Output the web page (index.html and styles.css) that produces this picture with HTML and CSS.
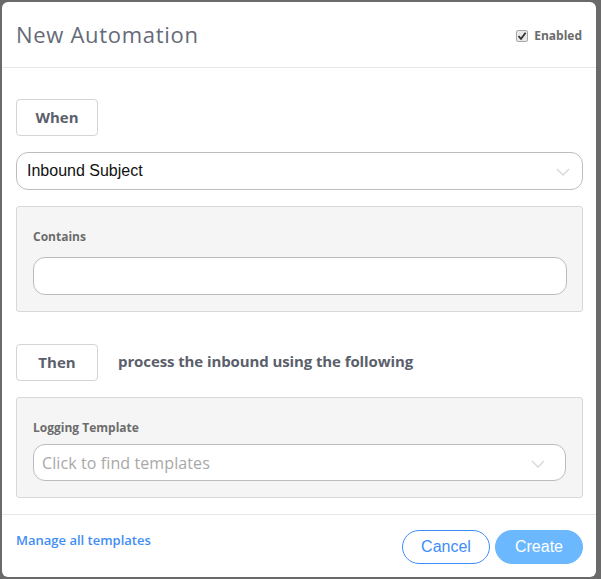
FILE: index.html
```html
<!DOCTYPE html>
<html>
<head>
<meta charset="utf-8">
<link rel="stylesheet" href="styles.css">
</head>
<body>
<div class="modal">
  <div class="header">
    <h1 class="title">New Automation</h1>
    <label class="enabled">
      <span class="check"><svg width="10" height="10" viewBox="0 0 10 10"><path d="M1.5 5.2 L4 7.8 L8.6 1.8" fill="none" stroke="#333" stroke-width="1.8"/></svg></span>
      <span>Enabled</span>
    </label>
  </div>
  <div class="content">
    <div class="tag">When</div>
    <div class="select big">
      <span class="value">Inbound Subject</span>
      <svg class="chev" width="14" height="8" viewBox="0 0 14 8"><path d="M1 1 L7 7 L13 1" fill="none" stroke="#d4d8dd" stroke-width="1.3"/></svg>
    </div>
    <div class="panel p1">
      <div class="label">Contains</div>
      <div class="input"></div>
    </div>
    <div class="row">
      <div class="tag">Then</div>
      <span class="desc">process the inbound using the following</span>
    </div>
    <div class="panel p2">
      <div class="label">Logging Template</div>
      <div class="select small">
        <span class="placeholder">Click to find templates</span>
        <svg class="chev" width="14" height="8" viewBox="0 0 14 8"><path d="M1 1 L7 7 L13 1" fill="none" stroke="#d4d8dd" stroke-width="1.3"/></svg>
      </div>
    </div>
  </div>
  <div class="footer">
    <a class="manage">Manage all templates</a>
    <div class="actions">
      <button class="btn cancel">Cancel</button>
      <button class="btn create">Create</button>
    </div>
  </div>
</div>
</body>
</html>
```

FILE: styles.css
```css
html, body {
  margin: 0;
  padding: 0;
  background: #6a6a6a;
}
body {
  padding: 2px 0 0 2px;
  width: 601px;
  height: 579px;
  box-sizing: border-box;
  overflow: hidden;
  font-family: "Open Sans", "Liberation Sans", sans-serif;
}
.modal {
  width: 594px;
  height: 575px;
  background: #fff;
  border-radius: 6px;
  display: flex;
  flex-direction: column;
  overflow: hidden;
}
.header {
  height: 65px;
  border-bottom: 1px solid #e6e6e6;
  display: flex;
  align-items: center;
  justify-content: space-between;
  padding: 0 14px 0 14px;
  flex: none;
}
.title {
  margin: 0;
  font-size: 22px;
  font-weight: 400;
  color: #656a78;
  letter-spacing: 0.7px;
  padding-bottom: 1px;
}
.enabled {
  display: flex;
  align-items: center;
  gap: 6px;
  font-size: 12px;
  font-weight: 700;
  color: #6b6b6b;
  padding-top: 2px;
}
.check {
  width: 10px;
  height: 10px;
  border: 1px solid #a8a8a8;
  border-radius: 2px;
  background: #e8e8e8;
  display: flex;
  align-items: center;
  justify-content: center;
}
.content {
  padding: 31px 13px 16px 14px;
  border-bottom: 1px solid #e6e6e6;
  flex: none;
}
.tag {
  width: 80px;
  height: 34px;
  padding-bottom: 1px;
  border: 1px solid #d4d4d4;
  border-radius: 4px;
  display: flex;
  align-items: center;
  justify-content: center;
  font-size: 15px;
  font-weight: 700;
  line-height: 1;
  color: #5b5f6b;
  flex: none;
}
.select {
  border: 1px solid #bcbcbc;
  border-radius: 12px;
  background: #fff;
  display: flex;
  align-items: center;
  justify-content: space-between;
  box-sizing: border-box;
}
.select.big {
  margin-top: 16px;
  height: 38px;
  padding: 0 12px 0 10px;
}
.value {
  font-family: "Liberation Sans", Arial, sans-serif;
  font-size: 16px;
  color: #111;
}
.chev {
  margin-top: 2px;
}
.panel {
  background: #f5f5f5;
  border: 1px solid #d8d8d8;
  border-radius: 3px;
  padding: 0 15px 0 16px;
}
.p1 {
  margin-top: 16px;
  padding-top: 21px;
  padding-bottom: 16px;
}
.label {
  font-size: 12px;
  font-weight: 700;
  color: #6c6c6c;
}
.input {
  margin-top: 12px;
  height: 38px;
  border: 1px solid #bcbcbc;
  border-radius: 12px;
  background: #fff;
  box-sizing: border-box;
}
.row {
  margin-top: 32px;
  display: flex;
  align-items: center;
  gap: 20px;
}
.desc {
  font-size: 15px;
  font-weight: 700;
  color: #5b5f6b;
  letter-spacing: -0.1px;
  margin-bottom: 3px;
}
.p2 {
  margin-top: 16px;
  padding-top: 21px;
  padding-bottom: 16px;
  padding-right: 16px;
}
.select.small {
  margin-top: 8px;
  height: 37px;
  padding: 0 20px 0 8px;
}
.placeholder {
  font-size: 16px;
  color: #a8a8a8;
  letter-spacing: 0.1px;
}
.footer {
  flex: 1;
  display: flex;
  justify-content: space-between;
  align-items: flex-start;
  padding: 0 13px 0 14px;
}
.manage {
  margin-top: 16px;
  font-size: 13px;
  font-weight: 600;
  color: #3f8ef5;
  cursor: pointer;
}
.actions {
  display: flex;
  gap: 5px;
  margin-top: 15px;
}
.btn {
  width: 88px;
  height: 34px;
  border-radius: 17px;
  font-family: "Liberation Sans", Arial, sans-serif;
  font-size: 16px;
  box-sizing: border-box;
  padding: 0;
}
.cancel {
  background: #fff;
  border: 1px solid #3d8ef8;
  color: #3d8ef8;
}
.create {
  background: #6bb8ff;
  border: 1px solid #6bb8ff;
  color: #fff;
}
```
